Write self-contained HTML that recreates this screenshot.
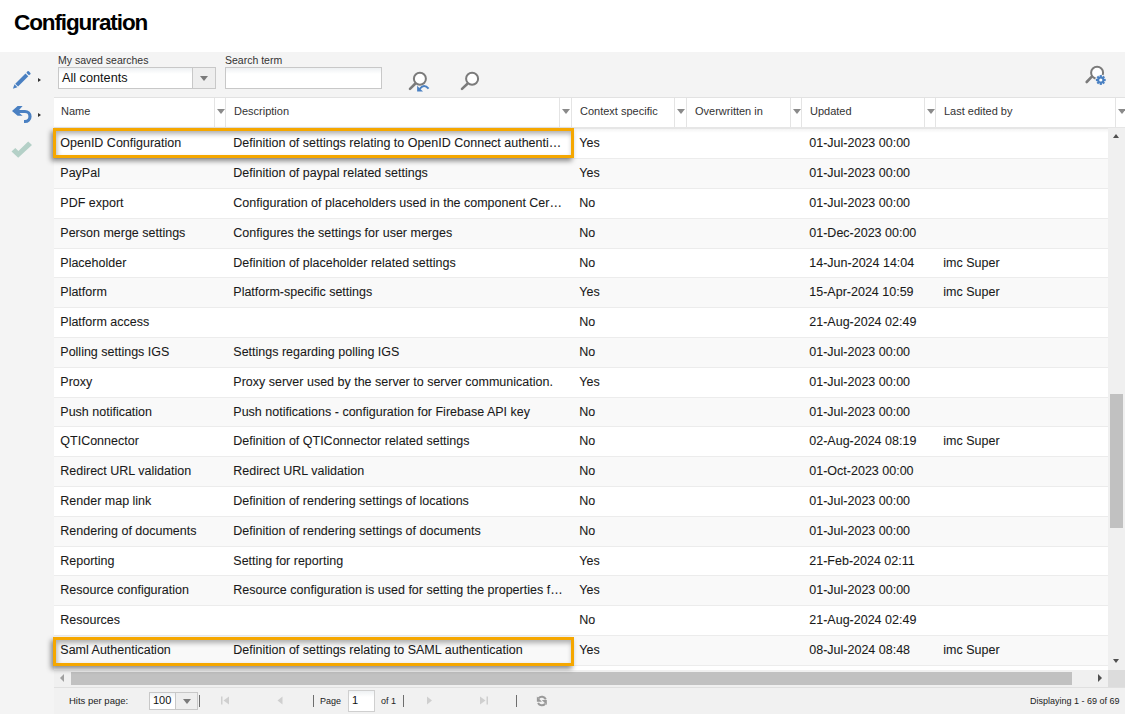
<!DOCTYPE html>
<html><head><meta charset="utf-8">
<style>
*{margin:0;padding:0;box-sizing:border-box}
html,body{width:1126px;height:714px;overflow:hidden;background:#fff;font-family:"Liberation Sans",sans-serif;color:#222}
.abs{position:absolute}
#title{position:absolute;left:14px;top:8px;font-size:22.5px;font-weight:bold;letter-spacing:-1.1px;color:#000;line-height:30px}
#band{position:absolute;left:0;top:52px;width:1125px;height:662px;background:#f4f4f4}
.lbl{position:absolute;font-size:10.5px;color:#333;line-height:12px}
.combo{position:absolute;border:1px solid #c8c8c8;background:linear-gradient(#eef1f3,#fff 6px,#fff)}
.combo .txt{position:absolute;left:3px;top:0;font-size:12.7px;line-height:20px;color:#111}
.combo .btn{position:absolute;top:0;bottom:0;right:0;border-left:1px solid #c8c8c8;background:#eeeeee}
.combo .btn:after{content:"";position:absolute;left:50%;top:50%;margin-left:-4px;margin-top:-2px;border-left:4px solid transparent;border-right:4px solid transparent;border-top:5px solid #7a7a7a}
#grid{position:absolute;left:54px;top:97px;width:1071px;height:589.5px;background:#fff;overflow:hidden}
#hdr{position:absolute;left:0;top:0;width:1071px;height:32px;background:#fff;border-top:1px solid #e2e2e2;border-bottom:2px solid #e6e6e6}
.ht{position:absolute;top:-1px;line-height:28px;font-size:11px;color:#333;white-space:nowrap}
.vs{position:absolute;top:0;width:1px;height:29px;background:#e4e4e4}
.tri{position:absolute;top:11px;width:0;height:0;border-left:4px solid transparent;border-right:4px solid transparent;border-top:5px solid #8a8a8a}
.row{position:absolute;left:0;width:1054px;height:29.8px;border-bottom:1px solid #ececec}
.c{position:absolute;top:-1px;line-height:30px;font-size:12.5px;color:#1a1a1a;white-space:nowrap;-webkit-text-stroke:0.08px #1a1a1a}
.hl{position:absolute;border:3px solid #f5a700;box-shadow:-2px 3px 5px rgba(0,0,0,0.45), inset 1px 3px 5px rgba(0,0,0,0.3)}
#vscroll{position:absolute;left:1054px;top:31px;width:17px;height:542px;background:#f0f0f0}
#vthumb{position:absolute;left:2px;top:266px;width:13px;height:134px;background:#c1c1c1}
#hscroll{position:absolute;left:0;top:573px;width:1054px;height:16.5px;background:#f0f0f0}
#hthumb{position:absolute;left:17px;top:2px;width:1001px;height:12.7px;background:#c1c1c1}
#corner{position:absolute;left:1054px;top:573px;width:17px;height:16.5px;background:#dcdcdc}
.arr{position:absolute;width:0;height:0}
#foot{position:absolute;left:54px;top:686.5px;width:1071px;height:27.5px;background:#f1f1f1;border-top:1px solid #e0e0e0}
.ft{position:absolute;font-size:9px;color:#222;line-height:12px;white-space:nowrap}
.sep{position:absolute;width:1px;height:12px;background:#6e6e6e}
</style></head><body>
<div id="title">Configuration</div>
<div id="band"></div>

<!-- sidebar icons -->
<svg class="abs" style="left:10px;top:68px" width="26" height="24" viewBox="0 0 26 24">
  <g transform="translate(2.9,20.8) rotate(45)" fill="#4a80c2">
    <path d="M0 0 L-2 -4.3 L2 -4.3 Z"/>
    <rect x="-2" y="-19.8" width="4" height="14.5"/>
    <rect x="-2" y="-23.6" width="4" height="2.8" rx="0.9"/>
  </g>
</svg>
<div class="arr" style="left:38px;top:78px;border-top:2.5px solid transparent;border-bottom:2.5px solid transparent;border-left:3px solid #333"></div>
<svg class="abs" style="left:10px;top:102px" width="26" height="24" viewBox="0 0 26 24">
  <path d="M2 8.9 L7.6 4 L12.6 4.1 L9.1 7.9 L15 7.9 A6.6 6.6 0 0 1 15 21.1 L14 21.1 L14 17.9 L15 17.9 A3.4 3.4 0 0 0 15 11.1 L9.4 11.1 L12.6 13.7 L7.6 13.8 Z" fill="#4a80c2"/>
</svg>
<div class="arr" style="left:38px;top:112.5px;border-top:2.5px solid transparent;border-bottom:2.5px solid transparent;border-left:3px solid #333"></div>
<svg class="abs" style="left:8px;top:136px" width="30" height="26" viewBox="0 0 30 26">
  <path d="M3.5 15.5 L7.3 12 L10.4 14.9 L20.2 5.5 L24 9.1 L10.2 21.8 Z" fill="#b4d0c7"/>
</svg>

<!-- toolbar -->
<div class="lbl" style="left:58px;top:54px">My saved searches</div>
<div class="combo" style="left:58px;top:67px;width:158px;height:22px"><span class="txt">All contents</span><span class="btn" style="width:23px"></span></div>
<div class="lbl" style="left:225px;top:54px">Search term</div>
<div class="combo" style="left:225px;top:67px;width:157px;height:22px"></div>

<svg class="abs" style="left:406px;top:70px" width="26" height="24" viewBox="0 0 26 24">
  <circle cx="13.9" cy="8.7" r="6" fill="#fff" stroke="#7b7b7b" stroke-width="2"/>
  <path d="M4 18.9 L8.9 14" stroke="#7b7b7b" stroke-width="2.6" stroke-linecap="round"/>
  <path d="M13.6 19 Q17.8 13.2 22.6 18.7" fill="none" stroke="#4a80c2" stroke-width="2"/>
  <path d="M11.1 15.7 L11.1 21.6 L17 21.6 Z" fill="#4a80c2"/>
</svg>
<svg class="abs" style="left:458px;top:70px" width="24" height="22" viewBox="0 0 24 22">
  <circle cx="14.1" cy="8.8" r="6" fill="#fff" stroke="#7b7b7b" stroke-width="2"/>
  <path d="M4 18.9 L9.2 14" stroke="#7b7b7b" stroke-width="2.6" stroke-linecap="round"/>
</svg>
<svg class="abs" style="left:1084px;top:63px" width="26" height="26" viewBox="0 0 26 26">
  <circle cx="13.1" cy="9.7" r="6" fill="#fff" stroke="#7b7b7b" stroke-width="2"/>
  <path d="M2.7 19 L7.3 14.2" stroke="#7b7b7b" stroke-width="2.6" stroke-linecap="round"/>
  <circle cx="16.8" cy="17" r="5.6" fill="#f4f4f4"/>
  <g transform="translate(16.8,17)" fill="#4a80c2">
    <circle r="3.6"/>
    <rect x="-1.1" y="-4.9" width="2.2" height="9.8"/>
    <rect x="-1.1" y="-4.9" width="2.2" height="9.8" transform="rotate(45)"/>
    <rect x="-1.1" y="-4.9" width="2.2" height="9.8" transform="rotate(90)"/>
    <rect x="-1.1" y="-4.9" width="2.2" height="9.8" transform="rotate(135)"/>
    <circle r="1.6" fill="#fff"/>
  </g>
</svg>

<div id="grid">
<div id="hdr">
<span class="ht" style="left:7px">Name</span>
<i class="vs" style="left:160px"></i>
<i class="tri" style="left:163px"></i>
<i class="vs" style="left:171px"></i>
<span class="ht" style="left:180px">Description</span>
<i class="vs" style="left:505px"></i>
<i class="tri" style="left:508px"></i>
<i class="vs" style="left:517px"></i>
<span class="ht" style="left:526px">Context specific</span>
<i class="vs" style="left:620px"></i>
<i class="tri" style="left:623px"></i>
<i class="vs" style="left:632px"></i>
<span class="ht" style="left:641px">Overwritten in</span>
<i class="vs" style="left:736px"></i>
<i class="tri" style="left:739px"></i>
<i class="vs" style="left:747px"></i>
<span class="ht" style="left:756px">Updated</span>
<i class="vs" style="left:870px"></i>
<i class="tri" style="left:873px"></i>
<i class="vs" style="left:881px"></i>
<span class="ht" style="left:890px">Last edited by</span>
<i class="vs" style="left:1061px"></i>
<i class="tri" style="left:1064px"></i>
</div>
<div class="row" style="top:32.30px;background:#ffffff"><span class="c" style="left:6.299999999999997px">OpenID Configuration</span><span class="c" style="left:179.3px">Definition of settings relating to OpenID Connect authenti…</span><span class="c" style="left:525.3px">Yes</span><span class="c" style="left:755.3px">01-Jul-2023 00:00</span></div>
<div class="row" style="top:62.11px;background:#f9f9f9"><span class="c" style="left:6.299999999999997px">PayPal</span><span class="c" style="left:179.3px">Definition of paypal related settings</span><span class="c" style="left:525.3px">Yes</span><span class="c" style="left:755.3px">01-Jul-2023 00:00</span></div>
<div class="row" style="top:91.92px;background:#ffffff"><span class="c" style="left:6.299999999999997px">PDF export</span><span class="c" style="left:179.3px">Configuration of placeholders used in the component Cer…</span><span class="c" style="left:525.3px">No</span><span class="c" style="left:755.3px">01-Jul-2023 00:00</span></div>
<div class="row" style="top:121.73px;background:#f9f9f9"><span class="c" style="left:6.299999999999997px">Person merge settings</span><span class="c" style="left:179.3px">Configures the settings for user merges</span><span class="c" style="left:525.3px">No</span><span class="c" style="left:755.3px">01-Dec-2023 00:00</span></div>
<div class="row" style="top:151.54px;background:#ffffff"><span class="c" style="left:6.299999999999997px">Placeholder</span><span class="c" style="left:179.3px">Definition of placeholder related settings</span><span class="c" style="left:525.3px">No</span><span class="c" style="left:755.3px">14-Jun-2024 14:04</span><span class="c" style="left:889.3px">imc Super</span></div>
<div class="row" style="top:181.35px;background:#f9f9f9"><span class="c" style="left:6.299999999999997px">Platform</span><span class="c" style="left:179.3px">Platform-specific settings</span><span class="c" style="left:525.3px">Yes</span><span class="c" style="left:755.3px">15-Apr-2024 10:59</span><span class="c" style="left:889.3px">imc Super</span></div>
<div class="row" style="top:211.16px;background:#ffffff"><span class="c" style="left:6.299999999999997px">Platform access</span><span class="c" style="left:525.3px">No</span><span class="c" style="left:755.3px">21-Aug-2024 02:49</span></div>
<div class="row" style="top:240.97px;background:#f9f9f9"><span class="c" style="left:6.299999999999997px">Polling settings IGS</span><span class="c" style="left:179.3px">Settings regarding polling IGS</span><span class="c" style="left:525.3px">No</span><span class="c" style="left:755.3px">01-Jul-2023 00:00</span></div>
<div class="row" style="top:270.78px;background:#ffffff"><span class="c" style="left:6.299999999999997px">Proxy</span><span class="c" style="left:179.3px">Proxy server used by the server to server communication.</span><span class="c" style="left:525.3px">Yes</span><span class="c" style="left:755.3px">01-Jul-2023 00:00</span></div>
<div class="row" style="top:300.59px;background:#f9f9f9"><span class="c" style="left:6.299999999999997px">Push notification</span><span class="c" style="left:179.3px">Push notifications - configuration for Firebase API key</span><span class="c" style="left:525.3px">No</span><span class="c" style="left:755.3px">01-Jul-2023 00:00</span></div>
<div class="row" style="top:330.40px;background:#ffffff"><span class="c" style="left:6.299999999999997px">QTIConnector</span><span class="c" style="left:179.3px">Definition of QTIConnector related settings</span><span class="c" style="left:525.3px">No</span><span class="c" style="left:755.3px">02-Aug-2024 08:19</span><span class="c" style="left:889.3px">imc Super</span></div>
<div class="row" style="top:360.21px;background:#f9f9f9"><span class="c" style="left:6.299999999999997px">Redirect URL validation</span><span class="c" style="left:179.3px">Redirect URL validation</span><span class="c" style="left:525.3px">No</span><span class="c" style="left:755.3px">01-Oct-2023 00:00</span></div>
<div class="row" style="top:390.02px;background:#ffffff"><span class="c" style="left:6.299999999999997px">Render map link</span><span class="c" style="left:179.3px">Definition of rendering settings of locations</span><span class="c" style="left:525.3px">No</span><span class="c" style="left:755.3px">01-Jul-2023 00:00</span></div>
<div class="row" style="top:419.83px;background:#f9f9f9"><span class="c" style="left:6.299999999999997px">Rendering of documents</span><span class="c" style="left:179.3px">Definition of rendering settings of documents</span><span class="c" style="left:525.3px">No</span><span class="c" style="left:755.3px">01-Jul-2023 00:00</span></div>
<div class="row" style="top:449.64px;background:#ffffff"><span class="c" style="left:6.299999999999997px">Reporting</span><span class="c" style="left:179.3px">Setting for reporting</span><span class="c" style="left:525.3px">Yes</span><span class="c" style="left:755.3px">21-Feb-2024 02:11</span></div>
<div class="row" style="top:479.45px;background:#f9f9f9"><span class="c" style="left:6.299999999999997px">Resource configuration</span><span class="c" style="left:179.3px">Resource configuration is used for setting the properties f…</span><span class="c" style="left:525.3px">Yes</span><span class="c" style="left:755.3px">01-Jul-2023 00:00</span></div>
<div class="row" style="top:509.26px;background:#ffffff"><span class="c" style="left:6.299999999999997px">Resources</span><span class="c" style="left:525.3px">No</span><span class="c" style="left:755.3px">21-Aug-2024 02:49</span></div>
<div class="row" style="top:539.07px;background:#f9f9f9"><span class="c" style="left:6.299999999999997px">Saml Authentication</span><span class="c" style="left:179.3px">Definition of settings relating to SAML authentication</span><span class="c" style="left:525.3px">Yes</span><span class="c" style="left:755.3px">08-Jul-2024 08:48</span><span class="c" style="left:889.3px">imc Super</span></div>
<div style="position:absolute;left:0;top:32px;width:1054px;height:4px;background:linear-gradient(rgba(0,0,0,0.045),rgba(0,0,0,0))"></div>
<div id="vscroll"><div id="vthumb"></div>
  <div class="arr" style="left:5px;top:5.5px;border-left:3.6px solid transparent;border-right:3.6px solid transparent;border-bottom:4.5px solid #505050"></div>
  <div class="arr" style="left:5px;top:531px;border-left:3.6px solid transparent;border-right:3.6px solid transparent;border-top:4.5px solid #505050"></div>
</div>
<div id="hscroll"><div id="hthumb"></div>
  <div class="arr" style="left:6px;top:4px;border-top:4px solid transparent;border-bottom:4px solid transparent;border-right:4.5px solid #a0a0a0"></div>
  <div class="arr" style="left:1044px;top:4px;border-top:4px solid transparent;border-bottom:4px solid transparent;border-left:4.5px solid #505050"></div>
</div>
<div id="corner"></div>
</div>

<div class="hl" style="left:53px;top:128px;width:521px;height:30px"></div>
<div class="hl" style="left:53px;top:637px;width:521px;height:29px"></div>

<!-- footer -->
<div id="foot"></div>
<div class="ft" style="left:69px;top:695px;font-size:9.5px">Hits per page:</div>
<div class="combo" style="left:149px;top:692px;width:49px;height:18px"><span class="txt" style="font-size:11px;line-height:15px">100</span><span class="btn" style="width:22px"></span></div>
<i class="sep" style="left:199px;top:695px"></i>
<svg class="abs" style="left:220px;top:696px" width="10" height="9" viewBox="0 0 10 9"><rect x="1" y="0.5" width="1.5" height="8" fill="#cfcfcf"/><path d="M9 0.5 L3.5 4.5 L9 8.5 Z" fill="#cfcfcf"/></svg>
<svg class="abs" style="left:276px;top:696px" width="8" height="9" viewBox="0 0 8 9"><path d="M6.5 0.5 L1.5 4.5 L6.5 8.5 Z" fill="#cfcfcf"/></svg>
<i class="sep" style="left:313px;top:695px"></i>
<div class="ft" style="left:320px;top:695px">Page</div>
<div class="combo" style="left:348px;top:690px;width:27px;height:22px;border-color:#cfcfcf"><span class="txt" style="font-size:11px;line-height:19px">1</span></div>
<div class="ft" style="left:381px;top:695px">of 1</div>
<i class="sep" style="left:403px;top:695px"></i>
<svg class="abs" style="left:426px;top:696px" width="8" height="9" viewBox="0 0 8 9"><path d="M1 0.5 L6 4.5 L1 8.5 Z" fill="#cfcfcf"/></svg>
<svg class="abs" style="left:479px;top:696px" width="10" height="9" viewBox="0 0 10 9"><path d="M1 0.5 L6.5 4.5 L1 8.5 Z" fill="#cfcfcf"/><rect x="7.5" y="0.5" width="1.5" height="8" fill="#cfcfcf"/></svg>
<i class="sep" style="left:516px;top:695px"></i>
<svg class="abs" style="left:535px;top:695px" width="14" height="13" viewBox="0 0 14 13">
  <path d="M3.56 3.24 A4.3 4.3 0 0 1 10.81 4.32" fill="none" stroke="#999" stroke-width="2"/>
  <path d="M10.14 8.76 A4.3 4.3 0 0 1 3.05 8.02" fill="none" stroke="#999" stroke-width="2"/>
  <path d="M1.9 1.6 L1.9 6.7 L6.9 6.7 Z" fill="#999"/>
  <path d="M11.8 4.9 L11.8 10.1 L6.8 4.9 Z" fill="#999"/>
</svg>
<div class="ft" style="left:1030px;top:695px">Displaying 1 - 69 of 69</div>
</body></html>
